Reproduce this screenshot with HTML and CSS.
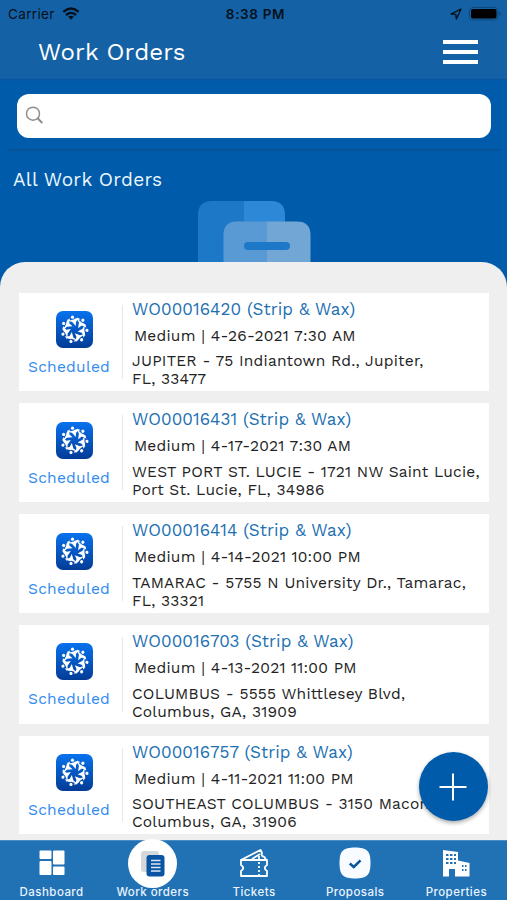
FILE: index.html
```html
<!DOCTYPE html>
<html lang="en">
<head>
<meta charset="utf-8">
<title>Work Orders</title>
<link rel="stylesheet" href="styles.css">
</head>
<body>
<svg class="defs" aria-hidden="true">
  <defs>
    <linearGradient id="tile" x1="0" y1="0" x2="0" y2="1"><stop offset="0" stop-color="#0872ee"/><stop offset="1" stop-color="#033c96"/></linearGradient>
    <g id="person"><circle cx="16.500" cy="6.200" r="1.600"/><path d="M10.500 8.500Q14 10 17.500 8.600Q21 5.800 24.500 8.200Q21.300 8.600 20 10.800L19.800 15L16 10.800Q13 10.800 10.500 8.500Z"/></g>
    <symbol id="logo" viewBox="0 0 37 37">
      <rect width="37" height="37" rx="7" fill="url(#tile)"/>
      <g fill="#fff">
        <use href="#person"/><use href="#person" transform="rotate(51.43 18.5 18.5)"/><use href="#person" transform="rotate(102.86 18.5 18.5)"/><use href="#person" transform="rotate(154.29 18.5 18.5)"/><use href="#person" transform="rotate(205.71 18.5 18.5)"/><use href="#person" transform="rotate(257.14 18.5 18.5)"/><use href="#person" transform="rotate(308.57 18.5 18.5)"/>
      </g>
    </symbol>
  </defs>
</svg>
<div class="screen">
  <header class="top">
    <div class="status">
      <div class="carrier"><span>Carrier</span>
        <svg width="18" height="13" viewBox="0 0 18 13"><g fill="none" stroke="#06101c" stroke-width="2.300"><path d="M1.300 4.900Q9 -1.800 16.700 4.900"/><path d="M4 8Q9 3.800 14 8"/></g><path d="M6.200 9.800Q9 7.600 11.800 9.800L9 12.800Z" fill="#06101c"/></svg>
      </div>
      <span class="clock">8:38 PM</span>
      <div class="power">
        <svg width="12" height="12" viewBox="0 0 12 12"><path d="M1 6.100L11 1L6.400 11L5.800 6.400Z" fill="none" stroke="#06101c" stroke-width="1.400" stroke-linejoin="round"/></svg>
        <svg width="33" height="14" viewBox="0 0 33 14"><rect x=".5" y=".5" width="28.500" height="12.500" rx="3.500" fill="none" stroke="#0c487f"/><rect x="2" y="2" width="25.500" height="9.500" rx="2" fill="#000"/><path d="M30.500 4.500Q33 6.800 30.500 9Z" fill="#0c487f"/></svg>
      </div>
    </div>
    <div class="bar"><h1>Work Orders</h1><div class="menu"><i></i><i></i><i></i></div></div>
  </header>
  <div class="searchwrap"><div class="search"><svg width="20" height="20" viewBox="0 0 20 20" fill="none" stroke="#8d8d8d"><circle cx="8" cy="7.700" r="6.500" stroke-width="1.400"/><path d="M12.600 12.300L17.300 17" stroke-width="2"/></svg></div></div>
  <div class="heading">
    <h2>All Work Orders</h2>
    <svg class="folders" width="114" height="61" viewBox="0 0 114 61">
      <path d="M0 62V14Q0 0 14 0H46V62Z" fill="#1e78c8"/><path d="M46 0H73Q87 0 87 14V62H46Z" fill="#2d88d7"/>
      <path d="M25.500 62V34Q25.500 20.500 39 20.500H69V62Z" fill="#599ad5"/><path d="M69 20.500H99Q112.500 20.500 112.500 34V62H69Z" fill="#72a7d5"/>
      <rect x="46" y="41" width="46" height="8" rx="4" fill="#1e78c8"/>
    </svg>
  </div>
  <main class="sheet">
    <article class="card"><div class="state"><svg><use href="#logo"/></svg><span>Scheduled</span></div><div class="info"><h3>WO00016420 (Strip &amp; Wax)</h3><p class="when">Medium | 4-26-2021 7:30 AM</p><p class="place">JUPITER - 75 Indiantown Rd., Jupiter,<br>FL, 33477</p></div></article>
    <article class="card"><div class="state"><svg><use href="#logo"/></svg><span>Scheduled</span></div><div class="info"><h3>WO00016431 (Strip &amp; Wax)</h3><p class="when">Medium | 4-17-2021 7:30 AM</p><p class="place">WEST PORT ST. LUCIE - 1721 NW Saint Lucie,<br>Port St. Lucie, FL, 34986</p></div></article>
    <article class="card"><div class="state"><svg><use href="#logo"/></svg><span>Scheduled</span></div><div class="info"><h3>WO00016414 (Strip &amp; Wax)</h3><p class="when">Medium | 4-14-2021 10:00 PM</p><p class="place">TAMARAC - 5755 N University Dr., Tamarac,<br>FL, 33321</p></div></article>
    <article class="card"><div class="state"><svg><use href="#logo"/></svg><span>Scheduled</span></div><div class="info"><h3>WO00016703 (Strip &amp; Wax)</h3><p class="when">Medium | 4-13-2021 11:00 PM</p><p class="place">COLUMBUS - 5555 Whittlesey Blvd,<br>Columbus, GA, 31909</p></div></article>
    <article class="card"><div class="state"><svg><use href="#logo"/></svg><span>Scheduled</span></div><div class="info"><h3>WO00016757 (Strip &amp; Wax)</h3><p class="when">Medium | 4-11-2021 11:00 PM</p><p class="place">SOUTHEAST COLUMBUS - 3150 Macon<br>Columbus, GA, 31906</p></div></article>
  </main>
  <nav class="tabs">
    <a><span class="ico"><svg width="26" height="26" viewBox="0 0 26 26" fill="#fff"><rect x=".5" y=".5" width="12" height="8.500" rx="1"/><rect x=".5" y="11" width="12" height="14" rx="1"/><rect x="14" y=".5" width="11.500" height="14" rx="1"/><rect x="14" y="16.500" width="11.500" height="8.500" rx="1"/></svg></span><b>Dashboard</b></a>
    <a class="on"><span class="ico"><svg width="49" height="49" viewBox="0 0 49 49"><circle cx="24.500" cy="24.500" r="24.500" fill="#fff"/><rect x="13" y="12" width="18" height="21" rx="3" fill="#d5d7da"/><rect x="18.500" y="16" width="18" height="21.500" rx="3" fill="#0a55a2"/><path d="M23 21.500h9.500M23 25h9.500M23 28.500h9.500M23 32h9.500" stroke="#dce9f5" stroke-width="1.300"/></svg></span><b>Work orders</b></a>
    <a><span class="ico"><svg width="30" height="30" viewBox="0 0 30 30" fill="none" stroke="#fff" stroke-width="1.800" stroke-linejoin="round"><path d="M2 12H28V17Q23.500 20 28 23V28H2V23Q6.500 20 2 17Z"/><path d="M2 12L21.500 2L23 5Q21.500 8 25.500 9L27 12M13 11L21 6M20 8V12"/><path d="M20 14V27" stroke-dasharray="2 2"/></svg></span><b>Tickets</b></a>
    <a><span class="ico"><svg width="32" height="32" viewBox="0 0 32 32"><path d="M16 .5C28 .5 31.500 4 31.500 16S28 31.500 16 31.500S.5 28 .5 16S4 .5 16 .5Z" fill="#f8fbff"/><path d="M10.800 16.500L14.800 20L21.500 13.300" fill="none" stroke="#0a559f" stroke-width="2.500"/></svg></span><b>Proposals</b></a>
    <a><span class="ico"><svg width="28" height="28" viewBox="0 0 28 28"><path d="M1 27.500V1L16 3V11.500L27.500 14V27.500H13V20H7V27.500Z" fill="#fff"/><path d="M4 5h2.500v2H4zm4 0h2.500v2H8zm4 0h2v2h-2zM4 9h2.500v2H4zm4 0h2.500v2H8zm4 0h2v2h-2zM4 13h2.500v2H4zm4 0h2.500v2H8zm4 0h2v2h-2zM20 16h1.500v2H20zm3 0h1.500v2H23zM20 20h1.500v2H20zm3 0h1.500v2H23z" fill="#2171b5"/></svg></span><b>Properties</b></a>
  </nav>
  <button class="add" aria-label="Add"><svg width="28" height="28" viewBox="0 0 28 28"><path d="M14 .5V27.500M.5 14H27.500" stroke="#fff" stroke-width="2"/></svg></button>
</div>
</body>
</html>
```

FILE: styles.css
```css
* { box-sizing: border-box; }
body, h1, h2, h3, p { margin: 0; font-weight: 400; }
.defs { position: absolute; width: 0; height: 0; }
.screen { position: relative; width: 507px; height: 900px; overflow: hidden; display: flex; flex-direction: column; background: #005cab; font-family: "Work Sans", Inter, "Liberation Sans", sans-serif; }
svg { display: block; flex: none; }
.top { height: 81px; flex: none; background: linear-gradient(#1462a5 78px, #0754a0 80px, #005cab); }
.status { display: grid; grid-template-columns: 1fr auto 1fr; align-items: center; height: 27px; padding: 0 5px 0 8px; color: #06101c; font-family: Inter, "Liberation Sans", sans-serif; font-size: 13.5px; }
.carrier { display: flex; align-items: center; gap: 7px; letter-spacing: .35px; }
.clock { font-weight: 600; letter-spacing: .65px; margin-left: 1px; }
.power { display: flex; align-items: center; justify-content: flex-end; gap: 7px; }
.bar { display: flex; justify-content: space-between; height: 50px; padding: 0 29px 0 38px; color: #fff; }
h1 { font-size: 24px; line-height: 50px; letter-spacing: .17px; }
.menu { width: 35px; padding-top: 13px; display: flex; flex-direction: column; gap: 6px; }
.menu i { height: 4px; background: #fff; }
.searchwrap { height: 70px; flex: none; margin: 0 7px; padding: 13px 9px 0 10px; border-bottom: 2px solid #07539a; }
.search { height: 43.500px; border-radius: 12px; background: #fff; padding: 12px 8px; }
.heading { height: 111px; flex: none; display: flex; flex-direction: column; justify-content: space-between; }
h2 { color: #eef7ff; font-size: 19px; line-height: 24px; margin: 17px 0 0 13px; letter-spacing: .3px; }
.folders { margin-left: 197.500px; }
.sheet { flex: 1; min-height: 0; overflow: hidden; background: #efefef; border-radius: 25px 25px 0 0; padding: 30.500px 18px 0 19px; display: flex; flex-direction: column; gap: 12px; }
.card { height: 98.800px; flex: none; display: flex; background: #fff; }
.state { width: 104px; flex: none; margin: 12px 0; padding: 6.500px 3px 0 0; border-right: 1px solid #e8e8e8; display: flex; flex-direction: column; align-items: center; color: #318bf0; font-size: 15.500px; }
.state svg { width: 37px; height: 37px; margin-left: 10px; }
.state span { margin-top: 9px; line-height: 20px; letter-spacing: .25px; }
.info { padding: 5.200px 0 0 9px; white-space: nowrap; color: #222; }
h3 { color: #2170b2; font-size: 17px; line-height: 23px; letter-spacing: .07px; }
.when { margin: 5px 0 0 2px; font-size: 15.500px; line-height: 20px; letter-spacing: .24px; }
.place { margin-top: 6.500px; font-size: 15.500px; line-height: 18px; letter-spacing: .22px; }
.tabs { position: relative; height: 60px; flex: none; display: grid; grid-template-columns: repeat(5, 1fr); background: #2171b5; border-top: 1px solid #4a8bc2; padding-left: 1px; }
.tabs a { display: flex; flex-direction: column; align-items: center; color: #e9f4ff; }
.ico { height: 44.500px; display: flex; align-items: center; justify-content: center; }
.tabs b { font-family: Inter, "Liberation Sans", sans-serif; font-size: 11.500px; line-height: 12px; font-weight: 500; letter-spacing: .45px; white-space: nowrap; }
.add { position: absolute; left: 418.500px; top: 752px; width: 69px; height: 69px; padding: 0; border: 0; border-radius: 50%; background: #005cab; display: flex; align-items: center; justify-content: center; box-shadow: 0 2px 4px #0005; }
```
